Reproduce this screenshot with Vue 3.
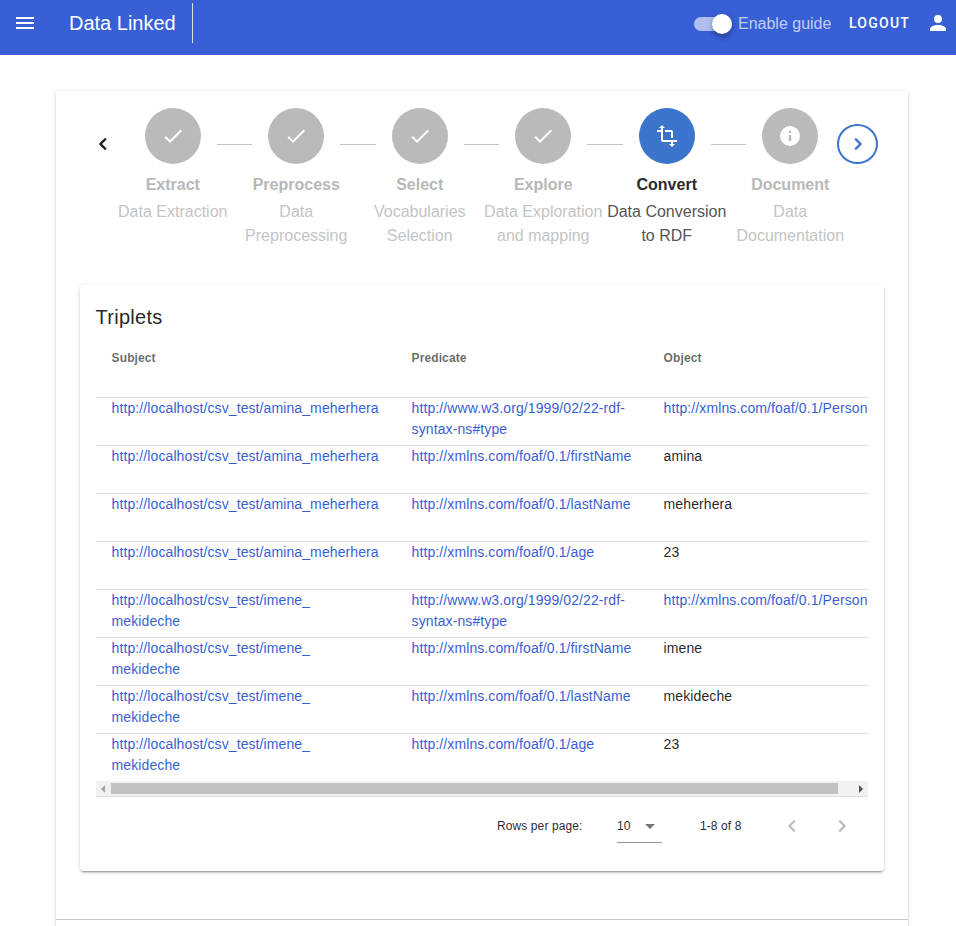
<script setup>
const check = 'M21,7L9,19L3.5,13.5L4.91,12.09L9,16.17L19.59,5.59L21,7Z'
const crop = 'M22 18v-2H8V4h2L7 1 4 4h2v2H2v2h4v8c0 1.1.9 2 2 2h8v2h-2l3 3 3-3h-2v-2h4zM10 8h6v6h2V8c0-1.1-.9-2-2-2h-6v2z'
const info = 'M13.2,9H10.8V6.8H13.2M13.2,17H10.8V11H13.2M12,2A10,10 0 0,0 2,12A10,10 0 0,0 12,22A10,10 0 0,0 22,12A10,10 0 0,0 12,2Z'
const left = 'M15.41,16.58L10.83,12L15.41,7.41L14,6L8,12L14,18L15.41,16.58Z'
const right = 'M8.59,16.58L13.17,12L8.59,7.41L10,6L16,12L10,18L8.59,16.58Z'

const steps = [
  { title: 'Extract', text: 'Data Extraction', icon: check },
  { title: 'Preprocess', text: 'Data Preprocessing', icon: check },
  { title: 'Select', text: 'Vocabularies Selection', icon: check },
  { title: 'Explore', text: 'Data Exploration and mapping', icon: check },
  { title: 'Convert', text: 'Data Conversion to RDF', icon: crop, active: true },
  { title: 'Document', text: 'Data Documentation', icon: info },
]

const base = 'http://localhost/csv_test/'
const type = ['http://www.w3.org/1999/02/22-rdf-', 'syntax-ns#type']
const foaf = 'http://xmlns.com/foaf/0.1/'
const amina = [base + 'amina_meherhera']
const imene = [base + 'imene_', 'mekideche']
const rows = [
  { s: amina, p: type, o: foaf + 'Person', link: true },
  { s: amina, p: [foaf + 'firstName'], o: 'amina' },
  { s: amina, p: [foaf + 'lastName'], o: 'meherhera' },
  { s: amina, p: [foaf + 'age'], o: '23' },
  { s: imene, p: type, o: foaf + 'Person', link: true },
  { s: imene, p: [foaf + 'firstName'], o: 'imene' },
  { s: imene, p: [foaf + 'lastName'], o: 'mekideche' },
  { s: imene, p: [foaf + 'age'], o: '23' },
]
</script>

<template>
  <div class="page">
    <header class="bar">
      <svg class="menu" viewBox="0 0 24 24"><path d="M3,6H21V8H3V6M3,11H21V13H3V11M3,16H21V18H3V16Z" /></svg>
      <div class="brand">Data Linked</div>
      <div class="divider"></div>
      <div class="switch"><span class="thumb"></span></div>
      <span class="guide">Enable guide</span>
      <span class="logout">LOGOUT</span>
      <svg class="user" viewBox="0 0 24 24"><path d="M12,4A4,4 0 0,1 16,8A4,4 0 0,1 12,12A4,4 0 0,1 8,8A4,4 0 0,1 12,4M12,14C16.42,14 20,15.79 20,18V20H4V18C4,15.79 7.58,14 12,14Z" /></svg>
    </header>

    <main class="card">
      <section class="stepper">
        <div class="prev"><svg viewBox="0 0 24 24"><path :d="left" /></svg></div>
        <div class="steps">
          <div class="dots">
            <template v-for="(step, i) in steps" :key="step.title">
              <span v-if="i" class="line"></span>
              <span class="dot" :class="{ active: step.active }">
                <svg viewBox="0 0 24 24"><path :d="step.icon" /></svg>
              </span>
            </template>
          </div>
          <div class="labels">
            <div v-for="step in steps" :key="step.title" class="label" :class="{ active: step.active }">
              <strong>{{ step.title }}</strong>
              <p>{{ step.text }}</p>
            </div>
          </div>
        </div>
        <div class="next"><svg viewBox="0 0 24 24"><path :d="right" /></svg></div>
      </section>

      <section class="panel">
        <h2>Triplets</h2>
        <div class="table">
          <div class="row head"><div>Subject</div><div>Predicate</div><div>Object</div></div>
          <div v-for="(row, i) in rows" :key="i" class="row">
            <div class="link"><span v-for="t in row.s" :key="t">{{ t }}</span></div>
            <div class="link"><span v-for="t in row.p" :key="t">{{ t }}</span></div>
            <div :class="{ link: row.link }"><span>{{ row.o }}</span></div>
          </div>
        </div>
        <div class="scroll">
          <i class="arrow back"></i>
          <div class="track"></div>
          <i class="arrow fwd"></i>
        </div>
        <footer class="pager">
          <span class="rpp">Rows per page:</span>
          <div class="select"><span>10</span><svg viewBox="0 0 24 24"><path d="M7,10L12,15L17,10H7Z" /></svg></div>
          <span class="range">1-8 of 8</span>
          <svg class="page-prev" viewBox="0 0 24 24"><path :d="left" /></svg>
          <svg class="page-next" viewBox="0 0 24 24"><path :d="right" /></svg>
        </footer>
      </section>
      <div class="rule"></div>
    </main>
  </div>
</template>

<style>
body { margin: 0; background: #fff; overflow: hidden; }
</style>

<style scoped>
.page {
  height: 926px;
  overflow: hidden;
  font-family: "Liberation Sans", Arial, sans-serif;
  font-size: 16px;
  line-height: 24px;
  color: rgba(0, 0, 0, 0.87);
}
svg { width: 24px; height: 24px; fill: currentColor; flex: none; display: block; }

.bar {
  display: flex;
  align-items: center;
  box-sizing: border-box;
  height: 55px;
  padding: 0 6px 9px 13px;
  background: #385fd6;
  color: #fff;
}
.brand { margin-left: 32px; width: 123px; font-size: 20px; white-space: nowrap; }
.divider { width: 1px; height: 40px; background: #e0e0e0; }
.switch {
  margin-left: 501px;
  width: 38px;
  height: 14px;
  margin-top: 2px;
  border-radius: 7px;
  background: rgba(255, 255, 255, 0.6);
  display: flex;
  align-items: center;
  justify-content: flex-end;
}
.thumb {
  width: 20px;
  height: 20px;
  flex: none;
  border-radius: 50%;
  background: #fff;
  box-shadow: 0 2px 4px -1px rgba(0, 0, 0, .2), 0 4px 5px 0 rgba(0, 0, 0, .14), 0 1px 10px 0 rgba(0, 0, 0, .12);
}
.guide { margin-left: 6px; width: 94px; margin-top: 2px; color: rgba(255, 255, 255, 0.7); white-space: nowrap; }
.logout {
  margin-left: 17px;
  margin-right: auto;
  font-family: Roboto, sans-serif;
  font-weight: 500;
  font-size: 14px;
  letter-spacing: 1.25px;
}

.card {
  margin: 36px 48px 0 56px;
  height: 900px;
  border-radius: 2px;
  box-shadow: 0 3px 1px -2px rgba(0, 0, 0, .2), 0 2px 2px 0 rgba(0, 0, 0, .14), 0 1px 5px 0 rgba(0, 0, 0, .12);
}
.stepper { display: flex; align-items: flex-start; height: 194px; }
.prev { margin: 40.5px 0 0 35px; width: 20px; display: flex; justify-content: flex-start; }
.steps { width: 741px; margin-top: 17px; }
.dots { display: flex; align-items: center; justify-content: center; height: 56px; }
.dot {
  width: 56px;
  height: 56px;
  flex: none;
  border-radius: 50%;
  background: #bababa;
  color: #fff;
  display: flex;
  align-items: center;
  justify-content: center;
}
.dot svg { margin-right: 0.5px; }
.dot.active { background: #3b74cb; }
.line { width: 35.5px; height: 1px; margin: 17px 16px 0; background: #c4c4c4; }
.labels { display: grid; grid-template-columns: repeat(6, 1fr); margin-top: 9px; text-align: center; }
.label { color: #b8b8b8; }
.label strong { display: block; }
.label p { margin: 3px 0 0; color: #c4c4c4; }
.label.active { color: #2b2b2b; }
.label.active p { color: #555; }
.next {
  width: 37px;
  height: 36px;
  margin: 33px 0 0 -15px;
  border: 2px solid #3b74cb;
  border-radius: 50%;
  color: #3b74cb;
  display: flex;
  align-items: center;
  justify-content: center;
}
.prev path, .next path { stroke: currentColor; stroke-width: 0.4; }

.panel {
  margin: 0 24px;
  height: 586px;
  box-sizing: border-box;
  padding: 16px;
  border-radius: 4px;
  box-shadow: 0 3px 1px -2px rgba(0, 0, 0, .2), 0 2px 2px 0 rgba(0, 0, 0, .14), 0 1px 5px 0 rgba(0, 0, 0, .12);
}
h2 { margin: 0 0 0 -0.4px; font-size: 20px; font-weight: 400; line-height: 32px; letter-spacing: 0.25px; }
.table { overflow: hidden; font-size: 14px; line-height: 21px; letter-spacing: 0.1px; }
.row {
  display: grid;
  grid-template-columns: 300px 252px 300px;
  height: 47px;
  border-bottom: 1px solid #dedede;
}
.row:last-child { border-bottom: 0; }
.row > div { padding-left: 15.6px; }
.row span { display: block; white-space: nowrap; }
.head {
  height: 64px;
  font-size: 12px;
  font-weight: 700;
  line-height: 50px;
  color: rgba(0, 0, 0, 0.6);
}
.link { color: #385fd6; }
.scroll {
  display: flex;
  align-items: center;
  height: 15px;
  background: #f1f1f1;
  border-bottom: 1px solid #dedede;
}
.arrow { width: 0; height: 0; border: 4px solid transparent; }
.back { margin: 0 6px 0 1px; border-right-color: #a3a3a3; }
.fwd { margin-left: 21px; border-left-color: #505050; }
.track { width: 727px; height: 11px; background: #c1c1c1; }
.pager { display: flex; align-items: center; height: 58px; font-size: 12px; letter-spacing: 0.1px; }
.rpp { margin-left: 401px; width: 120px; }
.select {
  display: flex;
  align-items: center;
  width: 45px;
  height: 32px;
  border-bottom: 1px solid #949494;
}
.select span { width: 21px; letter-spacing: 0; }
.select svg { color: rgba(0, 0, 0, 0.54); }
.range { margin-left: 38px; width: 79.5px; }
.page-prev, .page-next { color: rgba(0, 0, 0, 0.26); }
.page-next { margin-left: 26px; }
.page-prev path, .page-next path { stroke: currentColor; stroke-width: 0.2; }
.rule { margin-top: 48px; height: 1px; background: #c8c8c8; }
</style>
